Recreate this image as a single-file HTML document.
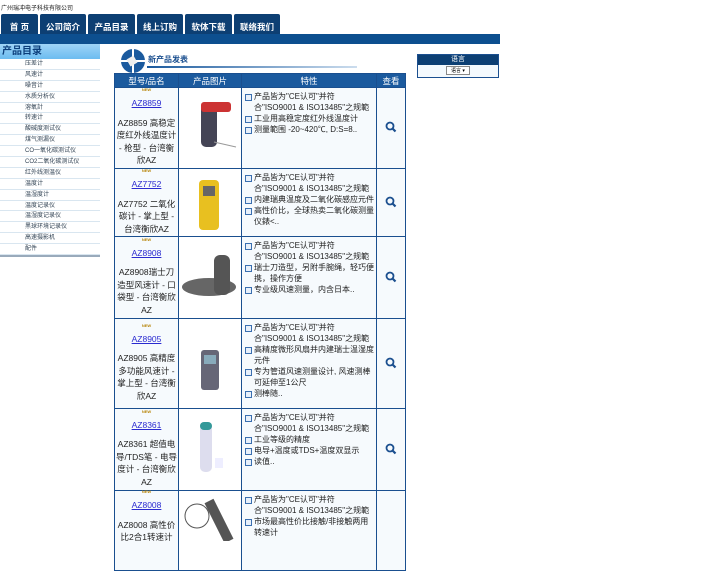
<!DOCTYPE html>
<html><head><meta charset="utf-8"><style>
*{margin:0;padding:0;box-sizing:border-box}
body{width:720px;height:540px;overflow:hidden;background:#fff;font-family:"Liberation Sans","Noto Sans CJK SC",sans-serif;position:relative}
.a{position:absolute}
.tab{position:absolute;top:14px;height:21px;background:#0d3f73;color:#fff;font-size:8.5px;font-weight:bold;text-align:center;line-height:27px;border-radius:2px 2px 0 0}
.side div{height:10.9px;border-bottom:1px solid #d9e6f0;font-size:6px;color:#345;padding-left:25px;line-height:10px}
table{border-collapse:collapse;position:absolute;left:114px;top:73px;width:291px;table-layout:fixed}
td,th{border:1.5px solid #1a4f8f;font-size:8px;vertical-align:middle}
th{background:#1b5a9e;color:#fff;font-weight:normal;height:14px;font-size:8.5px}
td.n{background:#f6fafd;text-align:center;line-height:12.5px;color:#222;font-size:8.5px}
td.n a{color:#2a2ad0;text-decoration:underline;display:block;margin:4px 0 7px}
.new{display:block;font-size:4px;color:#b8860b;font-weight:bold;margin-top:-2px;height:6px;line-height:6px}
td.f{background:#f6fafd;padding:3px 1px 2px 2px;line-height:11px;color:#222;vertical-align:top;font-size:8px}
td.f p{padding-left:10px;position:relative}
td.f p:before{content:"";position:absolute;left:1px;top:3px;width:5px;height:5px;border:1px solid #3a6fb0;background:#e8f0fa}
td.v{background:#f6fafd;text-align:center}
td.i{background:#fff}
</style></head><body>
<div class="a" style="left:1px;top:3px;font-size:6px;color:#222">广州瑞冲电子科技有限公司</div>
<div class="tab" style="left:1px;width:37px">首 页</div>
<div class="tab" style="left:40px;width:46px">公司简介</div>
<div class="tab" style="left:88px;width:47px">产品目录</div>
<div class="tab" style="left:137px;width:46px">线上订购</div>
<div class="tab" style="left:185px;width:47px">软体下载</div>
<div class="tab" style="left:234px;width:46px">联络我们</div>
<div class="a" style="left:0;top:34px;width:500px;height:10px;background:#0d4f8f"></div>
<div class="a" style="left:0;top:44px;width:100px;height:15px;background:linear-gradient(#9fd4f7,#6cbcf0);color:#0b3d7a;font-size:10px;font-weight:bold;padding-left:2px;line-height:15px">产品目录</div>
<div class="a side" style="left:0;top:59px;width:100px;border-bottom:2px solid #9ab">
<div>压差计</div><div>风速计</div><div>噪音计</div><div>水质分析仪</div><div>溶氧計</div><div>转速计</div><div>酸碱度测试仪</div><div>煤气测漏仪</div><div>CO一氧化碳测试仪</div><div>CO2二氧化碳测试仪</div><div>红外线测温仪</div><div>温度计</div><div>温湿度计</div><div>温度记录仪</div><div>温湿度记录仪</div><div>黑球环境记录仪</div><div>高速摄影机</div><div>配件</div></div>
<svg class="a" style="left:120px;top:48px" width="26" height="26" viewBox="0 0 26 26"><circle cx="13" cy="13" r="12" fill="#1b5a9e"/><path d="M13 1v24M1 13h24" stroke="#fff" stroke-width="2"/><rect x="8" y="9" width="8" height="8" fill="#eee" transform="rotate(-30 12 13)"/></svg>
<div class="a" style="left:148px;top:54px;font-size:8px;font-weight:bold;color:#1b4f8f">新产品发表</div>
<div class="a" style="left:147px;top:66px;width:210px;height:2px;background:linear-gradient(90deg,#1b5a9e,#cde)"></div>
<div class="a" style="left:417px;top:54px;width:82px;height:24px;border:1px solid #1b4f8f;background:#f4f9fd"><div style="background:#0d3f73;color:#fff;font-size:7px;text-align:center;height:10px;line-height:10px">语言</div><div style="margin:1px auto;width:24px;height:9px;border:1px solid #888;background:#fff;font-size:5px;line-height:8px;text-align:center">语言 ▾</div></div>
<table>
<colgroup><col style="width:64px"><col style="width:63px"><col style="width:135px"><col style="width:29px"></colgroup>
<tr><th>型号/品名</th><th>产品图片</th><th>特性</th><th>查看</th></tr>
<tr style="height:81px"><td class="n"><span class="new">NEW</span><a>AZ8859</a>AZ8859 高稳定度红外线温度计 - 枪型 - 台湾衡欣AZ</td><td class="i"><svg width="60" height="70"><rect x="22" y="10" width="16" height="45" rx="5" fill="#445"/><rect x="22" y="10" width="30" height="10" rx="3" fill="#c33"/><path d="M35 50l22 5" stroke="#999"/></svg></td><td class="f"><p>产品皆为"CE认可"并符合"ISO9001 &amp; ISO13485"之规範</p><p>工业用高稳定度红外线温度计</p><p>测量範围 -20~420℃, D:S=8..</p></td><td class="v"><svg width="12" height="12"><circle cx="5" cy="5" r="3.5" fill="none" stroke="#1b4f8f" stroke-width="1.8"/><path d="M7.5 7.5l3 3" stroke="#1b4f8f" stroke-width="2.2"/></svg></td></tr>
<tr style="height:68px"><td class="n"><span class="new">NEW</span><a>AZ7752</a>AZ7752 二氧化碳计 - 掌上型 - 台湾衡欣AZ</td><td class="i"><svg width="60" height="60"><rect x="20" y="8" width="20" height="50" rx="4" fill="#e8c020"/><rect x="24" y="14" width="12" height="10" fill="#666"/></svg></td><td class="f"><p>产品皆为"CE认可"并符合"ISO9001 &amp; ISO13485"之规範</p><p>内建瑞典温度及二氧化碳感应元件</p><p>高性价比，全球热卖二氧化碳测量仪錶&lt;..</p></td><td class="v"><svg width="12" height="12"><circle cx="5" cy="5" r="3.5" fill="none" stroke="#1b4f8f" stroke-width="1.8"/><path d="M7.5 7.5l3 3" stroke="#1b4f8f" stroke-width="2.2"/></svg></td></tr>
<tr style="height:82px"><td class="n"><span class="new">NEW</span><a>AZ8908</a>AZ8908瑞士刀造型风速计 - 口袋型 - 台湾衡欣AZ</td><td class="i"><svg width="60" height="60"><ellipse cx="30" cy="40" rx="27" ry="9" fill="#666"/><rect x="35" y="8" width="16" height="40" rx="6" fill="#555"/></svg></td><td class="f"><p>产品皆为"CE认可"并符合"ISO9001 &amp; ISO13485"之规範</p><p>瑞士刀造型，另附手腕绳，轻巧便携，操作方便</p><p>专业级风速测量，内含日本..</p></td><td class="v"><svg width="12" height="12"><circle cx="5" cy="5" r="3.5" fill="none" stroke="#1b4f8f" stroke-width="1.8"/><path d="M7.5 7.5l3 3" stroke="#1b4f8f" stroke-width="2.2"/></svg></td></tr>
<tr style="height:90px"><td class="n"><span class="new">NEW</span><a>AZ8905</a>AZ8905 高精度多功能风速计 - 掌上型 - 台湾衡欣AZ</td><td class="i"><svg width="60" height="70"><rect x="22" y="22" width="18" height="40" rx="3" fill="#667"/><rect x="25" y="27" width="12" height="9" fill="#8ab"/></svg></td><td class="f"><p>产品皆为"CE认可"并符合"ISO9001 &amp; ISO13485"之规範</p><p>高精度微形风扇并内建瑞士温湿度元件</p><p>专为管道风速测量设计, 风速测棒可延伸至1公尺</p><p>测棒随..</p></td><td class="v"><svg width="12" height="12"><circle cx="5" cy="5" r="3.5" fill="none" stroke="#1b4f8f" stroke-width="1.8"/><path d="M7.5 7.5l3 3" stroke="#1b4f8f" stroke-width="2.2"/></svg></td></tr>
<tr style="height:82px"><td class="n"><span class="new">NEW</span><a>AZ8361</a>AZ8361 超值电导/TDS笔 - 电导度计 - 台湾衡欣AZ</td><td class="i"><svg width="60" height="70"><rect x="21" y="8" width="12" height="50" rx="5" fill="#dde"/><rect x="21" y="8" width="12" height="8" rx="4" fill="#399"/><rect x="36" y="44" width="8" height="10" fill="#eef"/></svg></td><td class="f"><p>产品皆为"CE认可"并符合"ISO9001 &amp; ISO13485"之规範</p><p>工业等级的精度</p><p>电导+温度或TDS+温度双显示</p><p>读值..</p></td><td class="v"><svg width="12" height="12"><circle cx="5" cy="5" r="3.5" fill="none" stroke="#1b4f8f" stroke-width="1.8"/><path d="M7.5 7.5l3 3" stroke="#1b4f8f" stroke-width="2.2"/></svg></td></tr>
<tr style="height:80px"><td class="n" style="vertical-align:top"><span class="new">NEW</span><a>AZ8008</a>AZ8008 高性价比2合1转速计</td><td class="i" style="vertical-align:top"><svg width="60" height="50"><circle cx="18" cy="25" r="12" fill="none" stroke="#555"/><path d="M30 10l20 40" stroke="#555" stroke-width="10"/></svg></td><td class="f"><p>产品皆为"CE认可"并符合"ISO9001 &amp; ISO13485"之规範</p><p>市场最高性价比接触/非接触两用转速计</p></td><td class="v"></td></tr>
</table>
</body></html>
